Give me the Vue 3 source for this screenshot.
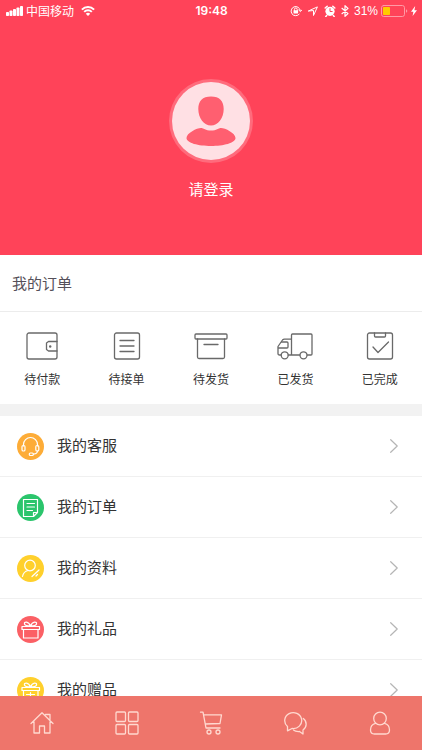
<script setup>
const orders = [
  { id: 'pay', label: '待付款' },
  { id: 'accept', label: '待接单' },
  { id: 'pack', label: '待发货' },
  { id: 'truck', label: '已发货' },
  { id: 'done', label: '已完成' },
]
const menu = [
  { id: 'service', label: '我的客服' },
  { id: 'order', label: '我的订单' },
  { id: 'profile', label: '我的资料' },
  { id: 'gift', label: '我的礼品' },
  { id: 'bonus', label: '我的赠品' },
]
const tabs = [
  { id: 'home', label: '首页' },
  { id: 'grid', label: '分类' },
  { id: 'cart', label: '购物车' },
  { id: 'chat', label: '消息' },
  { id: 'me', label: '我的' },
]
</script>

<template>
  <div class="page">
    <header class="hero">
      <div class="status">
        <div class="status-side">
          <svg class="signal" viewBox="0 0 17 10" aria-hidden="true">
            <rect x="0" y="6" width="3" height="4" rx=".8" />
            <rect x="3.5" y="4.5" width="3" height="5.5" rx=".8" />
            <rect x="7" y="3" width="3" height="7" rx=".8" />
            <rect x="10.5" y="1.5" width="3" height="8.5" rx=".8" />
            <rect x="14" y="0" width="3" height="10" rx=".8" />
          </svg>
          <span class="carrier">中国移动</span>
          <svg class="wifi" viewBox="0 0 14 10" aria-hidden="true">
            <path d="M.9 3.6a8.7 8.7 0 0 1 12.2 0M3.2 5.9a5.4 5.4 0 0 1 7.6 0" />
            <path class="solid" d="M4.8 7.7a3.2 3.2 0 0 1 4.4 0L7 10z" />
          </svg>
        </div>
        <time class="clock">19:48</time>
        <div class="status-side right">
          <svg class="glyph" viewBox="0 0 12 12" aria-hidden="true">
            <path d="M9.2 9.2A4.6 4.6 0 1 1 10.3 5.5M8.7 5l1.7 1.6L11.8 5" />
            <path d="M4.4 5.6V4.4a1.4 1.4 0 0 1 2.8 0v1.2" />
            <rect class="solid" x="3.5" y="5.3" width="4.6" height="3.2" rx=".4" />
          </svg>
          <svg class="glyph" viewBox="0 0 12 12" aria-hidden="true">
            <path d="M1.6 5.9 10.4 1.900 6.5 10.5V5.9z" />
          </svg>
          <svg class="glyph" viewBox="0 0 12 12" aria-hidden="true">
            <circle class="solid" cx="6" cy="6.3" r="4.6" />
            <path class="bells" d="M1.2 3 3.2 1.2M8.8 1.2 10.8 3M2.7 10.5l-.9 1M9.3 10.5l.9 1" />
            <path class="hand" d="M6 3.6v2.9h2.2" />
          </svg>
          <svg class="glyph bt" viewBox="0 0 8 12" aria-hidden="true">
            <path d="M1 3.300 7 8.600 4 11.300V.700l3 2.700L1 8.700" />
          </svg>
          <span>31%</span>
          <svg class="battery" viewBox="0 0 27 12" aria-hidden="true">
            <rect class="case" x=".5" y=".5" width="23" height="11" rx="2.2" />
            <rect class="charge" x="2" y="2" width="7" height="8" rx=".8" />
            <path class="cap" d="M25 4.2v3.6q1.3-.5 1.3-1.8T25 4.2" />
          </svg>
          <svg class="bolt" viewBox="0 0 6 10" aria-hidden="true">
            <path d="M4.200 0 0 5.800h2.400L1.600 10 6 4.200H3.400z" />
          </svg>
        </div>
      </div>
      <a class="login" href="#login">
        <svg class="avatar" viewBox="0 0 84 84" aria-hidden="true">
          <circle class="ring" cx="42" cy="42" r="42" />
          <circle class="disc" cx="42" cy="42" r="39" />
          <path class="person" d="M42 17.500c8.500 0 12.700 4.500 12.700 12.500C54.700 39 49 46.500 42 46.500S29.300 39 29.300 30C29.300 22 33.500 17.500 42 17.500zM32 49c2.500 0 4.500 2.600 10 2.600S49.500 49 52 49c4 0 14.500 5 14.500 10 0 5-12 8-24.500 8s-24.500-3-24.500-8c0-5 10.500-10 14.500-10z" />
        </svg>
        <span>请登录</span>
      </a>
    </header>

    <main class="content">
      <h2 class="section-title">我的订单</h2>
      <nav class="orders" aria-label="我的订单">
        <a v-for="o in orders" :key="o.id" class="order" :href="'#' + o.id">
          <svg class="order-icon" viewBox="0 0 38 30" aria-hidden="true">
            <template v-if="o.id === 'pay'">
              <rect x="4" y="2" width="30" height="26" rx="2" />
              <path d="M34 10.500h-8.500L23.500 12v6.500l2 1.500H34" />
              <circle class="dot" cx="27.200" cy="15.500" r="1.200" />
            </template>
            <template v-else-if="o.id === 'accept'">
              <rect x="6.500" y="2" width="25" height="26" rx="2" />
              <path d="M12 9.500h14M12 15h14M12 20.500h14" />
            </template>
            <template v-else-if="o.id === 'pack'">
              <rect x="3" y="3" width="32" height="5" rx="1" />
              <path d="M5.500 8v18q0 1.500 1.500 1.500h24q1.500 0 1.500-1.500V8M12 13.500h14" />
            </template>
            <template v-else-if="o.id === 'truck'">
              <path d="M5.200 24H3.500Q2 24 2 22.500V15.500L6.500 9q.7-.8 2-.8H15.500M12.200 24h11.600M15.500 24V4q0-1 1-1H35q1 0 1 1v19q0 1-1 1h-3.700" />
              <path d="M2.500 17H11q1 0 1-1v-4q0-1-1-1H5.500" />
              <circle cx="8.700" cy="24.300" r="3.500" />
              <circle cx="27.500" cy="24.300" r="3.500" />
            </template>
            <template v-else>
              <rect x="6.500" y="2" width="25" height="26" rx="2" />
              <path d="M13.500 2v3q0 1 1 1h9q1 0 1-1V2M12 16l5 5.500 10.500-10.500" />
            </template>
          </svg>
          <span>{{ o.label }}</span>
        </a>
      </nav>

      <ul class="menu">
        <li v-for="m in menu" :key="m.id">
          <a class="row" :href="'#my-' + m.id">
            <svg class="badge" :class="m.id" viewBox="0 0 27 27" aria-hidden="true">
              <circle class="bg" cx="13.500" cy="13.500" r="13.500" />
              <template v-if="m.id === 'service'">
                <path d="M6.500 13v-1.500a7 7 0 0 1 14 0V13M20.500 18q0 2.500-4 3.200" />
                <rect x="5" y="12.500" width="3" height="5.500" rx="1.300" />
                <rect x="18.800" y="12.500" width="3" height="5.500" rx="1.300" />
                <rect x="12.300" y="20" width="4" height="2.500" rx="1" />
              </template>
              <template v-else-if="m.id === 'order'">
                <path d="M6.500 5.500h14v13l-4 4h-10zM20.500 18.500h-4v4M10 9.500h7.500M10 13h7.500M10 16.500h5.500" />
              </template>
              <template v-else-if="m.id === 'profile'">
                <circle cx="13" cy="10.500" r="5.300" />
                <path d="M5.500 21.500q1-5 5.500-6M15 21.500l7-6.500M19 21l1.500-1.500" />
              </template>
              <template v-else>
                <path d="M5 10.500h17.500v3H5zM6.500 13.500v8.500h14.500v-8.500M13.500 10q-5.500 0-6-2t2-1.800q2.500.3 4 3.800 1.500-3.500 4-3.800 2.500-.2 2 1.800t-6 2" />
                <path v-if="m.id === 'bonus'" d="M13.500 15.500v6.500M9.500 17.500h8" />
              </template>
            </svg>
            <span class="row-label">{{ m.label }}</span>
            <svg class="chevron" viewBox="0 0 8 14" aria-hidden="true"><path d="M.7.700 7.200 7 .7 13.300" /></svg>
          </a>
        </li>
      </ul>
    </main>

    <nav class="tabbar" aria-label="主导航">
      <a v-for="t in tabs" :key="t.id" :href="'#tab-' + t.id" :aria-label="t.label">
        <svg viewBox="0 0 24 24" aria-hidden="true">
          <template v-if="t.id === 'home'">
            <path d="M1 12.500 12 1.800 23 12.500M4 10.500V22h5.500v-7h5v7H20V10.500M15.500 3.500H20v5" />
          </template>
          <template v-else-if="t.id === 'grid'">
            <rect x="1" y="1" width="9.500" height="9.500" rx="1" />
            <rect x="13.500" y="1" width="9.500" height="9.500" rx="1" />
            <rect x="1" y="13.500" width="9.500" height="9.500" rx="1" />
            <rect x="13.500" y="13.500" width="9.500" height="9.500" rx="1" />
          </template>
          <template v-else-if="t.id === 'cart'">
            <path d="M1.500 1.200H4L7 17h14M4.500 3.800h18l-1.500 8.700L6.200 13" />
            <circle cx="10" cy="21" r="2" />
            <circle cx="19" cy="21" r="2" />
          </template>
          <template v-else-if="t.id === 'chat'">
            <path d="M4.500 15.500A8.500 8 0 1 1 9 17.500L4.500 19.800z" />
            <path d="M20.300 7.500A7 7 0 0 1 20 19v4l-3.500-2.500q-4 .3-6-1.500" />
          </template>
          <template v-else>
            <circle cx="12" cy="7.500" r="6.300" />
            <path d="M7.500 12.300Q2.500 13.500 2.500 19q0 4 4 4h11q4 0 4-4 0-5.500-5-6.700" />
          </template>
        </svg>
      </a>
    </nav>
  </div>
</template>

<style>
body {
  margin: 0;
}
</style>

<style scoped>
.page {
  display: flex;
  flex-direction: column;
  height: 100vh;
  background: #fff;
  color: #333;
  font-family: "Liberation Sans", "Noto Sans CJK SC", sans-serif;
}
a {
  color: inherit;
  text-decoration: none;
}
svg {
  display: block;
  flex: none;
  fill: none;
  stroke-linecap: round;
  stroke-linejoin: round;
}
.hero {
  flex: none;
  padding-bottom: 54px;
  background: #ff4359;
  color: #fff;
}
.status {
  display: grid;
  grid-template-columns: 1fr auto 1fr;
  align-items: center;
  height: 22px;
  padding: 0 5px 0 6px;
  font-size: 12px;
}
.status-side {
  display: flex;
  align-items: center;
  gap: 3px;
}
.carrier {
  padding-bottom: 2px;
}
.right {
  justify-content: flex-end;
}
.signal {
  width: 17px;
  height: 10px;
  fill: #fff;
}
.wifi {
  width: 14px;
  height: 10px;
  margin-left: 4px;
  stroke: #fff;
  stroke-width: 2;
  stroke-linecap: butt;
}
.solid {
  fill: #fff;
  stroke: none;
}
.clock {
  padding-bottom: 1px;
  font-family: Inter, sans-serif;
  font-size: 12px;
  font-weight: 600;
}
.glyph {
  width: 12px;
  height: 12px;
  margin-right: 2px;
  stroke: #fff;
}
.bt {
  width: 8px;
  stroke-width: 1.2;
}
.bells {
  stroke-width: 1.5;
}
.hand {
  stroke: #ff4359;
}
.battery {
  width: 27px;
  height: 12px;
}
.case {
  stroke: #ff9aa6;
}
.charge {
  fill: #ffcc00;
}
.cap {
  fill: #ff9aa6;
}
.bolt {
  width: 6px;
  height: 10px;
  fill: #fff;
}
.login {
  display: flex;
  flex-direction: column;
  align-items: center;
  gap: 16px;
  padding-top: 57px;
  font-size: 15px;
  line-height: 22px;
}
.avatar {
  width: 84px;
  height: 84px;
}
.ring {
  fill: #ff6b7c;
}
.disc {
  fill: #ffe0e4;
}
.person {
  fill: #ff5f70;
}
.content {
  flex: 1;
  min-height: 0;
  overflow-y: auto;
  scrollbar-width: none;
}
.section-title {
  margin: 0;
  padding: 2px 12px 0;
  border-bottom: 1px solid #ececec;
  color: #555059;
  font-size: 15px;
  font-weight: 400;
  line-height: 54px;
}
.orders {
  display: grid;
  grid-template-columns: repeat(5, 1fr);
  padding: 19px 0 15px;
  border-bottom: 12px solid #f2f2f2;
}
.order {
  display: flex;
  flex-direction: column;
  align-items: center;
  gap: 10px;
  font-size: 12px;
  line-height: 18px;
}
.order-icon {
  width: 38px;
  height: 30px;
  stroke: #696969;
  stroke-width: 1.3;
}
.dot {
  fill: #696969;
  stroke: none;
}
.menu {
  margin: 0;
  padding: 0;
  list-style: none;
}
.row {
  display: flex;
  align-items: center;
  height: 60px;
  padding: 0 24px 0 17px;
  border-bottom: 1px solid #f0f0f0;
  font-size: 15px;
}
.row-label {
  flex: 1;
  padding: 0 0 4px 13px;
}
.badge {
  width: 27px;
  height: 27px;
  stroke: #fff;
  stroke-width: 1.2;
}
.bg {
  stroke: none;
  fill: #ffd02c;
}
.service .bg {
  fill: #fdac37;
}
.order .bg {
  fill: #2bc56c;
}
.gift .bg {
  fill: #fb6065;
}
.chevron {
  width: 8px;
  height: 14px;
  stroke: #b5b5b5;
  stroke-width: 1.2;
}
.tabbar {
  display: grid;
  flex: none;
  grid-template-columns: repeat(5, 1fr);
  height: 54px;
  background: #ee756b;
}
.tabbar a {
  display: flex;
  align-items: center;
  justify-content: center;
}
.tabbar svg {
  width: 24px;
  height: 24px;
  stroke: #ffd9d0;
  stroke-width: 1.3;
}
</style>
